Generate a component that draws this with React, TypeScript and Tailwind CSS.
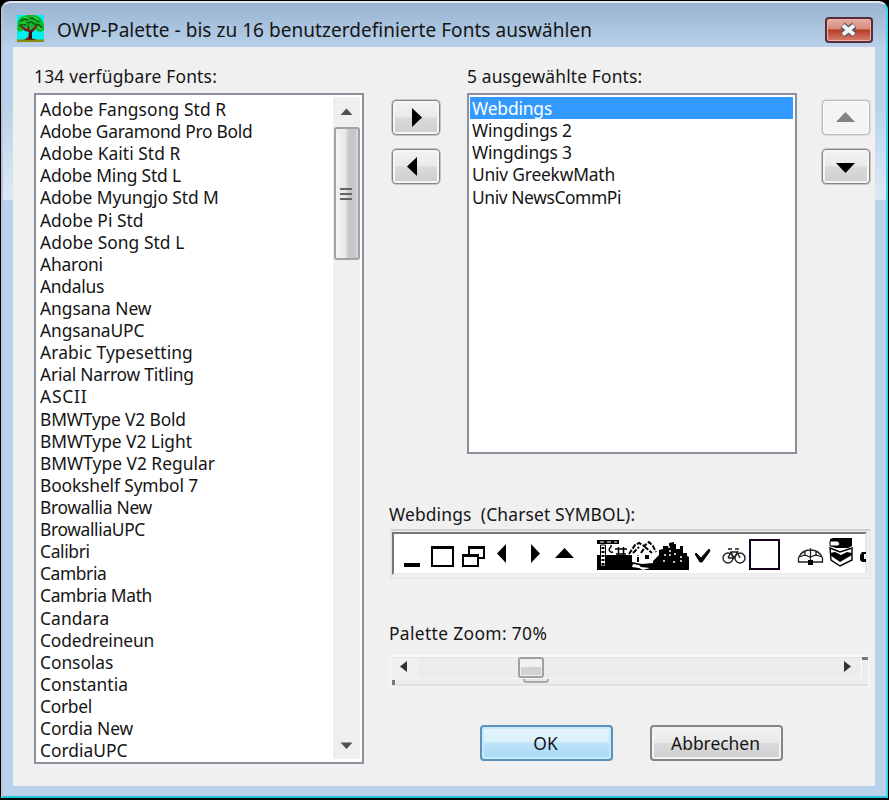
import React, { useState } from 'react';

const availableFonts = [
  { name: 'Adobe Fangsong Std R', spacing: 0.1 },
  { name: 'Adobe Garamond Pro Bold', spacing: -0.26 },
  { name: 'Adobe Kaiti Std R', spacing: 0.05 },
  { name: 'Adobe Ming Std L', spacing: -0.18 },
  { name: 'Adobe Myungjo Std M', spacing: -0.1 },
  { name: 'Adobe Pi Std', spacing: 0 },
  { name: 'Adobe Song Std L', spacing: 0.05 },
  { name: 'Aharoni', spacing: -0.2 },
  { name: 'Andalus', spacing: -0.25 },
  { name: 'Angsana New', spacing: -0.05 },
  { name: 'AngsanaUPC', spacing: -0.1 },
  { name: 'Arabic Typesetting', spacing: 0.1 },
  { name: 'Arial Narrow Titling', spacing: -0.2 },
  { name: 'ASCII', spacing: 0.8 },
  { name: 'BMWType V2 Bold', spacing: -0.17 },
  { name: 'BMWType V2 Light', spacing: -0.05 },
  { name: 'BMWType V2 Regular', spacing: 0 },
  { name: 'Bookshelf Symbol 7', spacing: -0.13 },
  { name: 'Browallia New', spacing: -0.3 },
  { name: 'BrowalliaUPC', spacing: -0.35 },
  { name: 'Calibri', spacing: -0.35 },
  { name: 'Cambria', spacing: -0.4 },
  { name: 'Cambria Math', spacing: -0.35 },
  { name: 'Candara', spacing: 0.1 },
  { name: 'Codedreineun', spacing: -0.15 },
  { name: 'Consolas', spacing: -0.05 },
  { name: 'Constantia', spacing: 0 },
  { name: 'Corbel', spacing: -0.3 },
  { name: 'Cordia New', spacing: -0.1 },
  { name: 'CordiaUPC', spacing: 0 },
];

const selectedFonts = [
  { name: 'Webdings', spacing: -0.15 },
  { name: 'Wingdings 2', spacing: -0.15 },
  { name: 'Wingdings 3', spacing: -0.15 },
  { name: 'Univ GreekwMath', spacing: -0.2 },
  { name: 'Univ NewsCommPi', spacing: -0.4 },
];

function TreeIcon() {
  return (
    <svg className="h-[27px] w-[27px]" viewBox="0 0 27 27">
      <rect width="27" height="27" fill="#00f0f0" />
      <rect y="24.500" width="27" height="2.500" fill="#8a8a10" />
      <path d="M1 6l3-4 6-2h8l6 3 3 6v6l-3 2-4-1-3-4-4 2-4-2-2 3-5 2-2-3z" fill="#10b828" />
      <path d="M7 25l4-3 1-5-4-1-5-5 1-1 6 4 1-5 2 6 3-2 4-4 1 1-4 6-3 2 0 5 6 2z" fill="#7a2010" />
      <path d="M12 16l3 0v8h-3z" fill="#3c0d06" />
      <path d="M3 6l4-2 4 1M13 3l5 1 4 3M2 11l4-2 3 1M17 9l5 1 3 3M10 8l4-1 3 2" fill="none" stroke="#075a18" strokeWidth="1.500" />
      <path d="M6 2l4 1M17 2l4 3M4 8l4 0M21 12l3 2" stroke="#3ee64a" strokeWidth="1.200" />
    </svg>
  );
}

type ArrowButtonProps = { points: string; disabled?: boolean };

function ArrowButton({ points, disabled }: ArrowButtonProps) {
  return (
    <button
      disabled={disabled}
      className={`flex h-[35px] w-[48px] items-center justify-center rounded-[4px] border-[1.5px] ${
        disabled
          ? 'border-[#b8bcc0] bg-[#f4f4f4] shadow-[inset_0_0_0_1px_#fbfbfb,0_0_0_0.5px_#c8ccd0]'
          : 'border-[#858585] bg-[linear-gradient(#f3f3f3_0%,#e9e9e9_49%,#dadada_51%,#cfcfcf_100%)] shadow-[inset_0_0_0_2px_#f6f6f6,0_0_0_0.5px_#9a9a9a]'
      }`}
    >
      <svg className="h-[20px] w-[20px]" viewBox="0 0 20 20">
        <polygon points={points} fill={disabled ? '#838383' : '#000'} />
      </svg>
    </button>
  );
}

function WebdingsPreview() {
  return (
    <svg className="h-[41px] w-[472px]" viewBox="394 534 472 41">
      <rect x="404" y="563" width="16" height="4" />
      <path d="M431 546h23v3h-23zM468 546h17v3h-17zM462 554h17v3h-17z" />
      <path d="M432 547h21v19h-21zM463 555h15v11h-15zM469 554v-7h15v11h-5" fill="none" stroke="#000" strokeWidth="2" />
      <path d="M506 544v19l-9-9.500zM531 544v19l9-9.500zM555 558l9.500-10 9.500 10z" />
      {/* skyline glyphs run into each other */}
      <path d="M597 555h35l3 5 10-1 8 2 6-6v-5l4-1v-3h6v-3l5-1v2h2v5h4v-3h3v7h4v3l2 1v13h-92z" />
      <path d="M597 540h22v4h-22z" />
      <path d="M600 542h17" stroke="#fff" strokeWidth="1" strokeDasharray="4 3" />
      <path d="M600.500 545h5v21h-5z" fill="#fff" stroke="#000" strokeWidth="1" />
      <path d="M603 547v19" stroke="#000" strokeWidth="3" strokeDasharray="2 2" fill="none" />
      <path d="M611 545v2c-3 2-2 6 2 5M615 549h12M616 554h10M618.500 547v9M623.500 547v9" stroke="#000" strokeWidth="1.500" fill="none" />
      <path d="M632 562v-7l-3-1 6-10 4-3 4 4 5-4 4 3 4 8-3 2v9l-11 1z" fill="#fff" />
      <path d="M629 554l6-9 4-2 5 3 5-4 4 4 3 6M633 553l6-6M641 553l4-6 7 6M638 562v-7" fill="none" stroke="#000" strokeWidth="2" strokeDasharray="5 1.500" />
      <path d="M645 555h4v4h-4z" />
      <path d="M633 564l6 1 2 2 9 1-7 2-4-2-7-1z" fill="#fff" />
      <path d="M665 554v3M670 550v8M675 553v3M681 556v8M663 561h3M673 562h3M668 547h2" fill="none" stroke="#fff" strokeWidth="1.500" strokeDasharray="2 2" />
      <path d="M695 554l1-1 5 5 8-9 1 2-8 11h-2z" stroke="#000" strokeWidth="1" />
      <g fill="none" stroke="#222" strokeWidth="1.400">
        <circle cx="728" cy="558" r="5" />
        <circle cx="740" cy="558" r="5" />
        <path d="M728 558l3-6h6l3 6M731 552l3 6 4-7M728 549h4M735 549h4M728 558h7" />
      </g>
      <rect x="750" y="540" width="29" height="29" fill="none" stroke="#150020" strokeWidth="2" />
      <path d="M798.500 562v-4c2-5 6-8 12-8s10 3 12 8v4h-24zM799 557l6-2 5 2 6-2 6 2M810.500 548v14M805 552v4M816 552v4" fill="none" stroke="#222" strokeWidth="1.300" />
      <rect x="808" y="560" width="5" height="5" />
      <path d="M830 539l3-1h19v8l-4 2h-12l-6-2z" />
      <path d="M830 541h8l2 3-2 2h-8z" fill="#fff" stroke="#000" strokeWidth="1" />
      <path d="M830 548l10 4 12-4v12l-12 6-9-6z" fill="#fff" stroke="#000" strokeWidth="1.400" />
      <path d="M830 553l5-1 6 3 6-3 5 1v2l-12 7-10-7z" />
      <path d="M866 552h-4l-2 3v5l2 2h4v-3h-2v-5h2z" />
    </svg>
  );
}

export default function App() {
  const [selected, setSelected] = useState('Webdings');

  return (
    <div className="h-[800px] w-[889px] overflow-hidden bg-black pb-[2px] pl-[1px] pr-[1px] pt-[1px] font-['Noto_Sans','Liberation_Sans',sans-serif] text-[17.4px] text-[#151515]">
      <div className="flex h-full flex-col rounded-t-[9px] border-2 border-b-[#23c5dc] border-l-[#b9c5d2] border-r-[#38d5ec] border-t-[#e0e8ef] bg-[linear-gradient(#99b4d1_0px,#b9d1ea_46px,#b9d1ea_100px,#dce8f5_196px,#b9d1ea_198px)] pb-[10px] pl-[10px] pr-[11px]">
        {/* Title bar */}
        <div className="flex h-[44px] shrink-0 items-start pl-[4px] pr-[2px]">
          <div className="pt-[12px]">
            <TreeIcon />
          </div>
          <span className="ml-[13px] mt-[14px] flex-1 whitespace-nowrap text-[19px] leading-[27px] tracking-[0.04px]">
            OWP-Palette - bis zu 16 benutzerdefinierte Fonts auswählen
          </span>
          <button className="mt-[14px] flex h-[26px] w-[48px] items-center justify-center rounded-[4px] border-2 border-[#582d3b] bg-[linear-gradient(#e9aca2_0%,#d98b7d_45%,#b93c24_50%,#d68070_100%)] shadow-[inset_0_0_0_1px_#e9b5aa]">
            <svg className="h-[18px] w-[22px]" viewBox="0 0 22 18">
              <path d="M4.500 4.500l12 9M16.500 4.500l-12 9" stroke="#5c5763" strokeWidth="7" />
              <path d="M5 4.500l11 9M16 4.500l-11 9" stroke="#f4f4f4" strokeWidth="4" />
            </svg>
          </button>
        </div>

        <div className="flex min-h-0 flex-1 bg-[#f0f0f0] pl-[21px]">
          {/* Available fonts */}
          <div className="w-[330px] shrink-0 pt-[17px]">
            <div className="h-[29px] leading-[24px] tracking-[0.2px]">134 verfügbare Fonts:</div>
            <div className="flex h-[671px] border-2 border-[#8a919b] bg-white">
              <ul className="flex-1 pl-[4px] pt-[3px]">
                {availableFonts.map((font) => (
                  <li
                    key={font.name}
                    style={{ letterSpacing: font.spacing }}
                    className="h-[22.11px] whitespace-nowrap leading-[22.11px]"
                  >
                    {font.name}
                  </li>
                ))}
              </ul>
              <div className="mb-[3px] mr-[2px] mt-[2px] flex w-[27px] flex-col items-center bg-[#efefef]">
                <svg className="mt-[10px] h-[9px] w-[13px]" viewBox="0 0 13 9">
                  <polygon points="0.5,8 6.5,1.5 12.5,8" fill="#505050" />
                </svg>
                <div className="mt-[11px] flex h-[133px] w-[26px] items-center justify-center rounded-[3px] border-2 border-[#a2a2a2] bg-[linear-gradient(90deg,#f4f4f4_0%,#e6e6e8_45%,#c9cacc_55%,#c4c5c8_85%,#dcdcde_100%)]">
                  <div className="flex flex-col gap-[3px] pr-[2px]">
                    <div className="h-[2px] w-[12px] bg-[#666]" />
                    <div className="h-[2px] w-[12px] bg-[#666]" />
                    <div className="h-[2px] w-[12px] bg-[#666]" />
                  </div>
                </div>
                <svg className="mb-[9px] mt-auto h-[9px] w-[13px]" viewBox="0 0 13 9">
                  <polygon points="0.5,1.5 12.5,1.5 6.5,8" fill="#505050" />
                </svg>
              </div>
            </div>
          </div>

          <div className="flex flex-1 flex-col pl-[25px]">
            <div className="flex h-[407px]">
              <div className="flex w-[78px] flex-col gap-[14px] pl-[3px] pt-[53px]">
                <ArrowButton points="6,0 6,19 16,9.5" />
                <ArrowButton points="11,0 11,19 1,9.5" />
              </div>

              {/* Selected fonts */}
              <div className="w-[330px] pt-[17px]">
                <div className="h-[29px] leading-[24px] tracking-[0.15px]">5 ausgewählte Fonts:</div>
                <div className="h-[361px] border-2 border-[#8a919b] bg-white pl-[1px] pr-[2px] pt-[2px]">
                  {selectedFonts.map((font) => (
                    <div
                      key={font.name}
                      onClick={() => setSelected(font.name)}
                      style={{ letterSpacing: font.spacing }}
                      className={`h-[22.14px] whitespace-nowrap pl-[2px] leading-[23px] ${
                        font.name === selected ? 'bg-[#3399ff] text-white' : ''
                      }`}
                    >
                      {font.name}
                    </div>
                  ))}
                </div>
              </div>

              <div className="flex flex-col gap-[14px] pl-[25px] pt-[53px]">
                <ArrowButton points="0,14 19,14 9.5,4" disabled />
                <ArrowButton points="0,6 19,6 9.5,16" />
              </div>
            </div>

            {/* Preview strip */}
            <div className="mt-[48px] h-[27px] whitespace-pre leading-[24px] tracking-[0.15px]">Webdings  (Charset SYMBOL):</div>
            <div className="ml-[1px] h-[50px] w-[481px] border-2 border-b-[#e6eaf0] border-l-[#e4e4e4] border-r-[#e6eaf0] border-t-[#cfcfcf] pt-[1px]">
              <div className="h-[43px] w-[475px] border-2 border-b-[#eeeeee] border-l-[#777] border-r-[#e6e6e6] border-t-[#777] bg-white">
                <WebdingsPreview />
              </div>
            </div>

            {/* Zoom slider */}
            <div className="mt-[42px] h-[34px] leading-[24px] tracking-[0.35px]">Palette Zoom: 70%</div>
            <svg className="h-[32px] w-[482px]" viewBox="389 655 482 32">
              <rect x="390" y="655" width="479" height="32" fill="#f8f8f8" />
              <rect x="391" y="657" width="477" height="28" fill="#ececec" />
              <rect x="391" y="657" width="477" height="1" fill="#e2e2e2" />
              <rect x="391" y="658" width="27" height="20" fill="#f0f0f0" />
              <rect x="394" y="678" width="467" height="1" fill="#f6f6f6" />
              <rect x="392" y="684" width="476" height="2" fill="#e0e0e0" />
              <rect x="861" y="659" width="1" height="20" fill="#fafafa" />
              <path d="M407 661v11l-7-5.500z" fill="#333" />
              <path d="M844 661v11l7-5.500z" fill="#333" />
              <rect x="392" y="680" width="3" height="5" fill="#777" />
              <rect x="862" y="657" width="6" height="3" fill="#777" />
              <path d="M524 679v1q0 2 3 2h18q3 0 3-2v-1" fill="#e4e4e4" stroke="#aaa" strokeWidth="2" />
              <rect x="519" y="658" width="24" height="19" rx="2" fill="#f1f1f1" stroke="#a0a0a0" strokeWidth="2" />
              <rect x="521" y="667" width="20" height="8" fill="#d2d2d4" />
            </svg>

            <div className="mt-[38px] flex gap-[37px] pl-[91px]">
              <button className="h-[36px] w-[133px] rounded-[4px] border-2 border-[#5a91bd] bg-[linear-gradient(#e9f5fc_0%,#d9f0fb_46%,#bde4fa_50%,#a6d9f4_100%)] pr-[2px] shadow-[inset_0_0_0_2px_#c8ebfc]">
                OK
              </button>
              <button className="h-[36px] w-[133px] rounded-[4px] border-2 border-[#858585] bg-[linear-gradient(#f3f3f3_0%,#e9e9e9_49%,#dadada_51%,#cfcfcf_100%)] pr-[2px] shadow-[inset_0_0_0_2px_#f3f3f3]">
                Abbrechen
              </button>
            </div>
          </div>
        </div>
      </div>
    </div>
  );
}
